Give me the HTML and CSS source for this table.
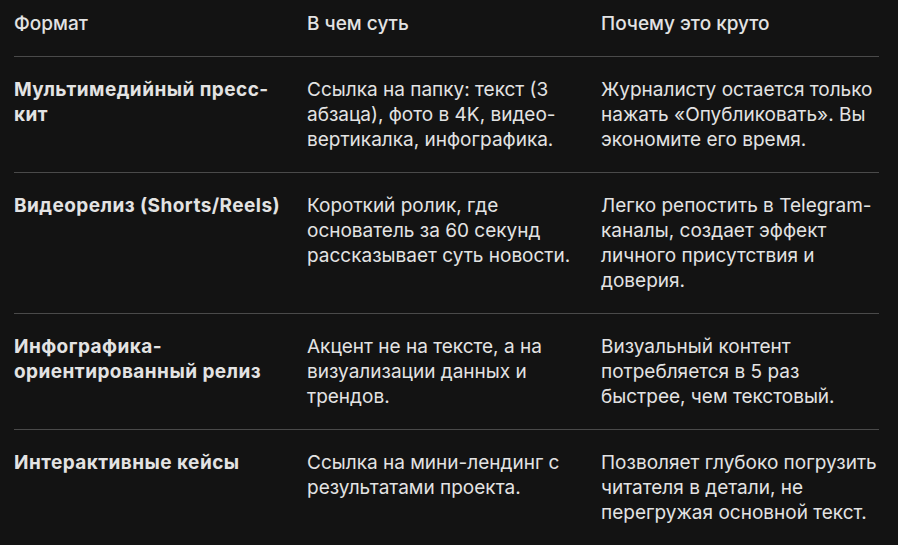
FILE: index.html
```html
<!DOCTYPE html>
<html lang="ru">
<head>
<meta charset="utf-8">
<link rel="stylesheet" href="styles.css">
</head>
<body>
<div class="wrap">
  <table class="tbl">
    <colgroup><col class="c1"><col class="c2"><col class="c3"></colgroup>
    <thead>
      <tr><th>Формат</th><th>В чем суть</th><th>Почему это круто</th></tr>
    </thead>
    <tbody>
      <tr>
        <td><b>Мультимедийный пресс-кит</b></td>
        <td>Ссылка на папку: текст (3 абзаца), фото в 4K, видео-вертикалка, инфографика.</td>
        <td>Журналисту остается только нажать «Опубликовать». Вы экономите его время.</td>
      </tr>
      <tr>
        <td><b>Видеорелиз (Shorts/Reels)</b></td>
        <td>Короткий ролик, где основатель за 60 секунд рассказывает суть новости.</td>
        <td>Легко репостить в Telegram-каналы, создает эффект личного присутствия и доверия.</td>
      </tr>
      <tr>
        <td><b>Инфографика-ориентированный релиз</b></td>
        <td>Акцент не на тексте, а на визуализации данных и трендов.</td>
        <td>Визуальный контент потребляется в 5 раз быстрее, чем текстовый.</td>
      </tr>
      <tr>
        <td><b>Интерактивные кейсы</b></td>
        <td>Ссылка на мини-лендинг с результатами проекта.</td>
        <td>Позволяет глубоко погрузить читателя в детали, не перегружая основной текст.</td>
      </tr>
    </tbody>
  </table>
</div>
</body>
</html>
```
FILE: styles.css
```css
html, body {
  margin: 0;
  padding: 0;
  background: #131313;
}
body {
  font-family: Inter, "Noto Sans", sans-serif;
  font-size: 19px;
  color: #e3e3e3;
}
.wrap {
  padding: 0 14px;
}
.tbl {
  border-collapse: collapse;
  table-layout: fixed;
  width: 865px;
}
.c1 { width: 293px; }
.c2 { width: 294px; }
.c3 { width: 278px; }
th, td {
  text-align: left;
  vertical-align: top;
  padding: 20px 16px 20px 0;
  line-height: 25px;
}
th {
  font-weight: 500;
  padding-top: 11px;
  padding-bottom: 20px;
  border-bottom: 1px solid #4a4a4a;
}
tbody tr + tr td {
  border-top: 1px solid #4a4a4a;
}
td:last-child, th:last-child {
  padding-right: 0;
}
b {
  font-weight: 700;
  letter-spacing: 0.45px;
}
```
